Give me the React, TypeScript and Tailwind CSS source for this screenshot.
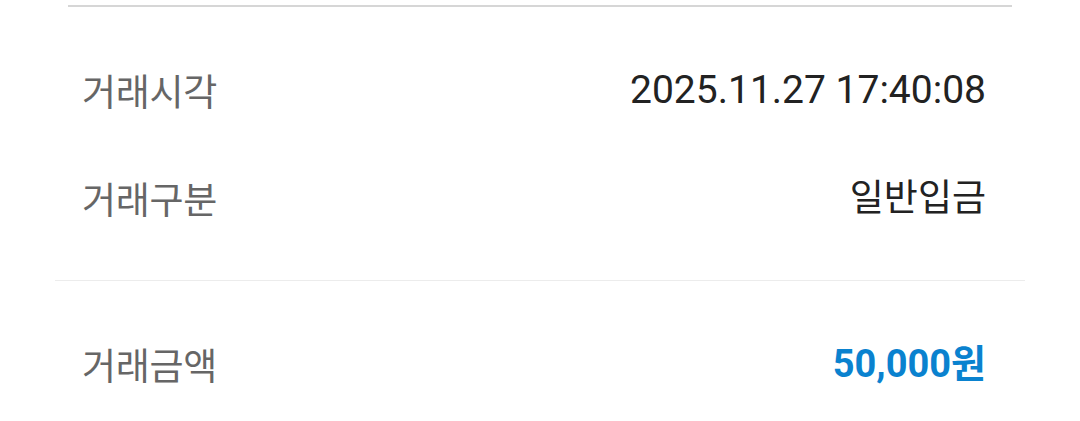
import React from "react";

const labelCls =
  "text-[37px] leading-none text-[#666666] tracking-[-0.3px] [font-family:'Noto_Sans_CJK_KR','Noto_Sans',sans-serif]";
const valueCls =
  "text-[39px] leading-none text-[#222222] [font-family:Roboto,'Noto_Sans_CJK_KR',sans-serif]";
const koValueCls =
  "text-[37px] leading-none text-[#222222] [font-family:Roboto,'Noto_Sans_CJK_KR',sans-serif]";

function Row({ label, value, valueClass }: { label: string; value: string; valueClass: string }) {
  return (
    <div className="flex h-[108px] items-center justify-between pl-[82px] pr-[94px]">
      <span className={labelCls}>{label}</span>
      <span className={valueClass}>{value}</span>
    </div>
  );
}

export default function App() {
  return (
    <div className="h-[421px] w-[1080px] overflow-hidden bg-white">
      <div className="pt-[5px]">
        <div className="mx-[68px] h-[2px] bg-[#d6d6d6]" />
      </div>
      <div className="mt-[29px]">
        <Row label="거래시각" value="2025.11.27 17:40:08" valueClass={valueCls} />
        <Row label="거래구분" value="일반입금" valueClass={koValueCls} />
      </div>
      <div className="mx-[55px] mt-[28px] h-px bg-[#ececec]" />
      <div className="mt-[29px]">
        <Row
          label="거래금액"
          value="50,000원"
          valueClass="text-[38px] leading-none font-bold text-[#0a82cf] [font-family:Roboto,'Noto_Sans_CJK_KR',sans-serif]"
        />
      </div>
    </div>
  );
}
